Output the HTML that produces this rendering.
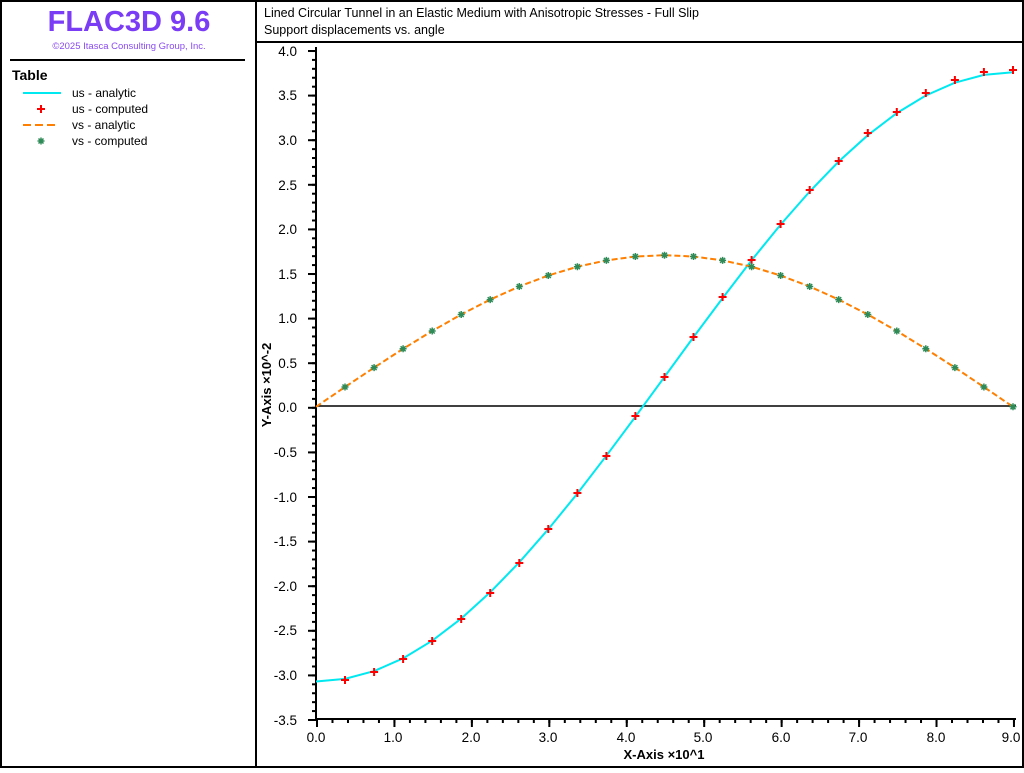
<!DOCTYPE html>
<html><head><meta charset="utf-8"><style>
html,body{margin:0;padding:0;background:#fff;}
body{width:1024px;height:768px;overflow:hidden;font-family:"Liberation Sans","DejaVu Sans",sans-serif;}
svg text{font-family:"Liberation Sans","DejaVu Sans",sans-serif;}
</style></head><body>
<svg width="1024" height="768" viewBox="0 0 1024 768" xmlns="http://www.w3.org/2000/svg">
<defs>
<pattern id="ym" x="0" y="50" width="10" height="8.92" patternUnits="userSpaceOnUse"><rect x="0" y="0" width="10" height="2" fill="#000"/></pattern>
<pattern id="yM" x="0" y="50" width="12" height="44.6" patternUnits="userSpaceOnUse"><rect x="0" y="0" width="12" height="2" fill="#000"/></pattern>
<pattern id="xm" x="316" y="0" width="15.488" height="10" patternUnits="userSpaceOnUse"><rect x="0" y="0" width="2" height="10" fill="#000"/></pattern>
<pattern id="xM" x="316" y="0" width="77.44" height="12" patternUnits="userSpaceOnUse"><rect x="0" y="0" width="2" height="12" fill="#000"/></pattern>
<g id="p"><path d="M-4 0H4M0 -4V4" stroke="#f00" stroke-width="2"/></g>
<g id="a"><path d="M-3.5 0H3.5M0 -3.5V3.5M-2.5 -2.5L2.5 2.5M-2.5 2.5L2.5 -2.5" stroke="#2e8b57" stroke-width="1.5"/></g>
</defs>
<rect x="1" y="1" width="1022" height="766" fill="none" stroke="#000" stroke-width="2"/>
<line x1="256" y1="0" x2="256" y2="768" stroke="#000" stroke-width="2"/>
<line x1="256" y1="42" x2="1024" y2="42" stroke="#000" stroke-width="2"/>
<line x1="10" y1="60" x2="245" y2="60" stroke="#000" stroke-width="2"/>
<text x="129" y="31" text-anchor="middle" font-size="29" font-weight="bold" fill="#7b3cf5">FLAC3D 9.6</text>
<text x="129" y="49" text-anchor="middle" font-size="9.5" fill="#8a4cf0">©2025 Itasca Consulting Group, Inc.</text>
<text x="12" y="80" font-size="14" font-weight="bold">Table</text>
<line x1="23" y1="93" x2="61" y2="93" stroke="#00e8f0" stroke-width="2"/>
<text x="72" y="97" font-size="12">us - analytic</text>
<use href="#p" x="41" y="109"/>
<text x="72" y="113" font-size="12">us - computed</text>
<line x1="23" y1="125" x2="57" y2="125" stroke="#ff7f00" stroke-width="2" stroke-dasharray="8,4"/>
<text x="72" y="129" font-size="12">vs - analytic</text>
<use href="#a" x="41" y="141"/>
<text x="72" y="145" font-size="12">vs - computed</text>
<text x="264" y="17" font-size="12.5">Lined Circular Tunnel in an Elastic Medium with Anisotropic Stresses - Full Slip</text>
<text x="264" y="34" font-size="12.5">Support displacements vs. angle</text>
<line x1="316" y1="47" x2="316" y2="720" stroke="#000" stroke-width="2"/>
<line x1="315" y1="719" x2="1016" y2="719" stroke="#000" stroke-width="2"/>
<line x1="316" y1="406" x2="1016" y2="406" stroke="#000" stroke-width="1.5"/>
<rect x="312" y="49" width="4" height="672" fill="url(#ym)"/>
<rect x="308" y="49" width="8" height="672" fill="url(#yM)"/>
<rect x="315" y="719" width="700" height="4" fill="url(#xm)"/>
<rect x="315" y="719" width="700" height="8" fill="url(#xM)"/>
<g font-size="13.5" text-anchor="end">
<text x="297" y="56">4.0</text><text x="297" y="100">3.5</text><text x="297" y="145">3.0</text><text x="297" y="190">2.5</text><text x="297" y="234">2.0</text><text x="297" y="279">1.5</text><text x="297" y="323">1.0</text><text x="297" y="368">0.5</text><text x="297" y="412">0.0</text><text x="297" y="457">-0.5</text><text x="297" y="502">-1.0</text><text x="297" y="546">-1.5</text><text x="297" y="591">-2.0</text><text x="297" y="635">-2.5</text><text x="297" y="680">-3.0</text><text x="297" y="725">-3.5</text>
</g>
<g font-size="13.5" text-anchor="middle">
<text x="316" y="742">0.0</text><text x="393" y="742">1.0</text><text x="471" y="742">2.0</text><text x="548" y="742">3.0</text><text x="626" y="742">4.0</text><text x="703" y="742">5.0</text><text x="781" y="742">6.0</text><text x="858" y="742">7.0</text><text x="936" y="742">8.0</text><text x="1011" y="742">9.0</text>
</g>
<text x="664" y="759" font-size="13" font-weight="bold" text-anchor="middle">X-Axis ×10^1</text>
<text transform="translate(271,385) rotate(-90)" font-size="13" font-weight="bold" text-anchor="middle">Y-Axis ×10^-2</text>
<polyline fill="none" stroke="#00e8f0" stroke-width="2" points="316,681.5 345,678.9 374.1,671.1 403.1,658.3 432.2,640.7 461.2,618.6 490.2,592.3 519.3,562.3 548.3,529.2 577.4,493.5 606.4,455.7 635.4,416.7 664.5,376.9 693.5,337.1 722.6,298.1 751.6,260.3 780.6,224.6 809.7,191.5 838.7,161.5 867.8,135.2 896.8,113.1 925.8,95.5 954.9,82.7 983.9,74.9 1013,72.3"/>
<polyline fill="none" stroke="#ff7f00" stroke-width="2" stroke-dasharray="6,3" points="316,406.8 345,387 374.1,367.6 403.1,348.8 432.2,331 461.2,314.5 490.2,299.6 519.3,286.5 548.3,275.5 577.4,266.7 606.4,260.4 635.4,256.5 664.5,255.2 693.5,256.5 722.6,260.4 751.6,266.7 780.6,275.5 809.7,286.5 838.7,299.6 867.8,314.5 896.8,331 925.8,348.8 954.9,367.6 983.9,387 1013,406.8"/>
<g>
<use href="#p" x="345" y="680"/><use href="#p" x="374.1" y="672"/><use href="#p" x="403.1" y="659"/><use href="#p" x="432.2" y="641"/><use href="#p" x="461.2" y="619"/><use href="#p" x="490.2" y="593"/><use href="#p" x="519.3" y="563"/><use href="#p" x="548.3" y="529"/><use href="#p" x="577.4" y="493"/><use href="#p" x="606.4" y="456"/><use href="#p" x="635.4" y="416"/><use href="#p" x="664.5" y="377"/><use href="#p" x="693.5" y="337"/><use href="#p" x="722.6" y="297"/><use href="#p" x="751.6" y="260"/><use href="#p" x="780.6" y="224"/><use href="#p" x="809.7" y="190"/><use href="#p" x="838.7" y="161"/><use href="#p" x="867.8" y="133"/><use href="#p" x="896.8" y="112"/><use href="#p" x="925.8" y="93"/><use href="#p" x="954.9" y="80"/><use href="#p" x="983.9" y="72"/><use href="#p" x="1013" y="70"/>
</g>
<g>
<use href="#a" x="345" y="387"/><use href="#a" x="374.1" y="367.6"/><use href="#a" x="403.1" y="348.8"/><use href="#a" x="432.2" y="331"/><use href="#a" x="461.2" y="314.5"/><use href="#a" x="490.2" y="299.6"/><use href="#a" x="519.3" y="286.5"/><use href="#a" x="548.3" y="275.5"/><use href="#a" x="577.4" y="266.7"/><use href="#a" x="606.4" y="260.4"/><use href="#a" x="635.4" y="256.5"/><use href="#a" x="664.5" y="255.2"/><use href="#a" x="693.5" y="256.5"/><use href="#a" x="722.6" y="260.4"/><use href="#a" x="751.6" y="266.7"/><use href="#a" x="780.6" y="275.5"/><use href="#a" x="809.7" y="286.5"/><use href="#a" x="838.7" y="299.6"/><use href="#a" x="867.8" y="314.5"/><use href="#a" x="896.8" y="331"/><use href="#a" x="925.8" y="348.8"/><use href="#a" x="954.9" y="367.6"/><use href="#a" x="983.9" y="387"/><use href="#a" x="1013" y="406.8"/>
</g>
</svg>
</body></html>
